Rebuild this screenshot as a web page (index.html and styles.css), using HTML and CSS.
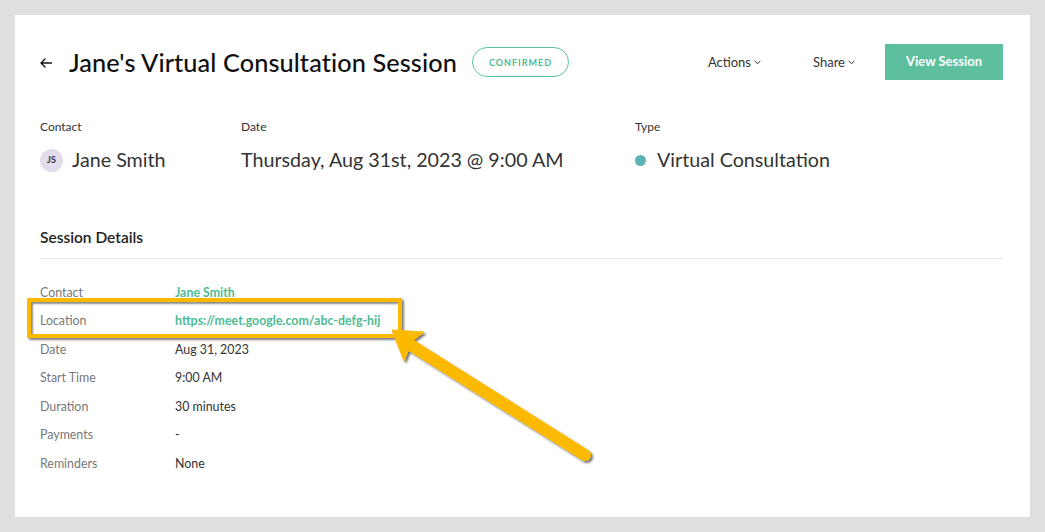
FILE: index.html
```html
<!DOCTYPE html>
<html>
<head>
<meta charset="utf-8">
<link rel="stylesheet" href="styles.css">
</head>
<body>
<div class="card">
  <header class="header">
    <div class="title-group">
      <svg class="back" width="12" height="10" viewBox="0 0 12 10"><path d="M11.5 5H1M5 1L1 5l4 4" fill="none" stroke="#111" stroke-width="1.3" stroke-linecap="round" stroke-linejoin="round"/></svg>
      <h1 class="title">Jane's Virtual Consultation Session</h1>
      <span class="pill">CONFIRMED</span>
    </div>
    <div class="actions">
      <span class="menu">Actions <svg width="7" height="5" viewBox="0 0 7 5"><path d="M0.6 0.8L3.5 3.8 6.4 0.8" fill="none" stroke="#333" stroke-width="1"/></svg></span>
      <span class="menu">Share <svg width="7" height="5" viewBox="0 0 7 5"><path d="M0.6 0.8L3.5 3.8 6.4 0.8" fill="none" stroke="#333" stroke-width="1"/></svg></span>
      <button class="btn">View Session</button>
    </div>
  </header>

  <section class="summary">
    <div class="col col-contact">
      <div class="label">Contact</div>
      <div class="value"><span class="avatar">JS</span>Jane Smith</div>
    </div>
    <div class="col col-date">
      <div class="label">Date</div>
      <div class="value">Thursday, Aug 31st, 2023 @ 9:00 AM</div>
    </div>
    <div class="col col-type">
      <div class="label">Type</div>
      <div class="value"><span class="dot"></span>Virtual Consultation</div>
    </div>
  </section>

  <h2 class="section-title">Session Details</h2>

  <dl class="details">
    <div class="row"><dt>Contact</dt><dd class="link">Jane Smith</dd></div>
    <div class="row"><dt>Location</dt><dd class="link">https://meet.google.com/abc-defg-hij</dd></div>
    <div class="row"><dt>Date</dt><dd>Aug 31, 2023</dd></div>
    <div class="row"><dt>Start Time</dt><dd>9:00 AM</dd></div>
    <div class="row"><dt>Duration</dt><dd>30 minutes</dd></div>
    <div class="row"><dt>Payments</dt><dd>-</dd></div>
    <div class="row"><dt>Reminders</dt><dd>None</dd></div>
  </dl>

  <div class="highlight"></div>
</div>

<svg class="arrow" width="1045" height="532" viewBox="0 0 1045 532">
  <defs>
    <filter id="sh" x="-20%" y="-20%" width="140%" height="140%">
      <feDropShadow dx="2" dy="2" stdDeviation="1.3" flood-color="#000" flood-opacity="0.55"/>
    </filter>
  </defs>
  <g filter="url(#sh)" fill="#fbb900" stroke="#fbb900">
    <line x1="409" y1="344" x2="585" y2="455" stroke-width="12" stroke-linecap="round"/>
    <path d="M392 330 L424 332 L412 341 L404 361 Z" stroke-width="1" stroke-linejoin="round"/>
  </g>
</svg>
</body>
</html>
```
FILE: styles.css
```css
* { box-sizing: border-box; }
html, body { margin: 0; padding: 0; }
body {
  background: #dfdfdf;
  width: 1045px;
  height: 532px;
  padding: 15px 15px 15px 15px;
  font-family: "Lato", "Noto Sans", sans-serif;
  color: #222;
  position: relative;
  overflow: hidden;
}
.card {
  background: #fff;
  width: 1015px;
  height: 502px;
  padding: 29px 27px 0 25px;
  position: relative;
}
.header {
  display: flex;
  align-items: center;
  justify-content: space-between;
  height: 36px;
}
.title-group { display: flex; align-items: center; }
.back { margin-right: 17px; margin-top: 1px; }
.title {
  margin: 0;
  font-size: 25.3px;
  font-weight: 500;
  color: #111;
  letter-spacing: 0.1px;
}
.pill {
  margin-left: 15px;
  height: 30px;
  padding: 0 16px;
  border: 1.5px solid #5cc3a0;
  border-radius: 15px;
  display: inline-flex;
  align-items: center;
  color: #4dbb94;
  font-size: 9px;
  font-weight: 700;
  letter-spacing: 1px;
}
.actions { display: flex; align-items: center; }
.menu {
  font-size: 13px;
  color: #333;
  display: inline-flex;
  align-items: center;
  gap: 3px;
  margin-right: 52px;
}
.menu svg { margin-top: 1px; }
.menu + .menu { margin-right: 30px; }
.btn {
  background: #5dbf9d;
  color: #fff;
  border: none;
  width: 118px;
  height: 36px;
  font-family: inherit;
  font-size: 13px;
  font-weight: 700;
  padding: 0 0 3px 0;
}
.summary {
  display: flex;
  margin-top: 39px;
}
.col-contact { width: 201px; }
.col-date { width: 394px; }
.label {
  font-size: 12px;
  line-height: 16px;
  color: #333;
}
.value {
  margin-top: 13px;
  font-size: 19.7px;
  line-height: 24px;
  color: #333;
  display: flex;
  align-items: center;
}
.avatar {
  width: 23px;
  height: 23px;
  border-radius: 50%;
  background: #e3dcec;
  color: #333;
  font-size: 9px;
  font-weight: 700;
  display: inline-flex;
  align-items: center;
  justify-content: center;
  margin-right: 9px;
}
.dot {
  width: 11px;
  height: 11px;
  border-radius: 50%;
  background: #5cb3b5;
  margin-right: 11px;
}
.section-title {
  margin: 55px 0 0 0;
  font-size: 15.5px;
  line-height: 20px;
  font-weight: 600;
  color: #222;
  padding-bottom: 11px;
  border-bottom: 1px solid #e6e6e6;
}
.details { margin: 19px 0 0 0; }
.row {
  display: flex;
  align-items: center;
  height: 28.5px;
  font-size: 12.4px;
}
.row dt { width: 135px; color: #777; }
.row dd { margin: 0; color: #333; }
.row dd.link { color: #4dbb94; font-weight: 700; }
.highlight {
  position: absolute;
  left: 12px;
  top: 283px;
  width: 375px;
  height: 40px;
  border: 4px solid #fbb900;
  box-shadow: 2px 2px 2px rgba(0,0,0,0.5), inset 2px 2px 2px rgba(0,0,0,0.45);
}
.arrow {
  position: absolute;
  left: 0;
  top: 0;
  pointer-events: none;
}
```
